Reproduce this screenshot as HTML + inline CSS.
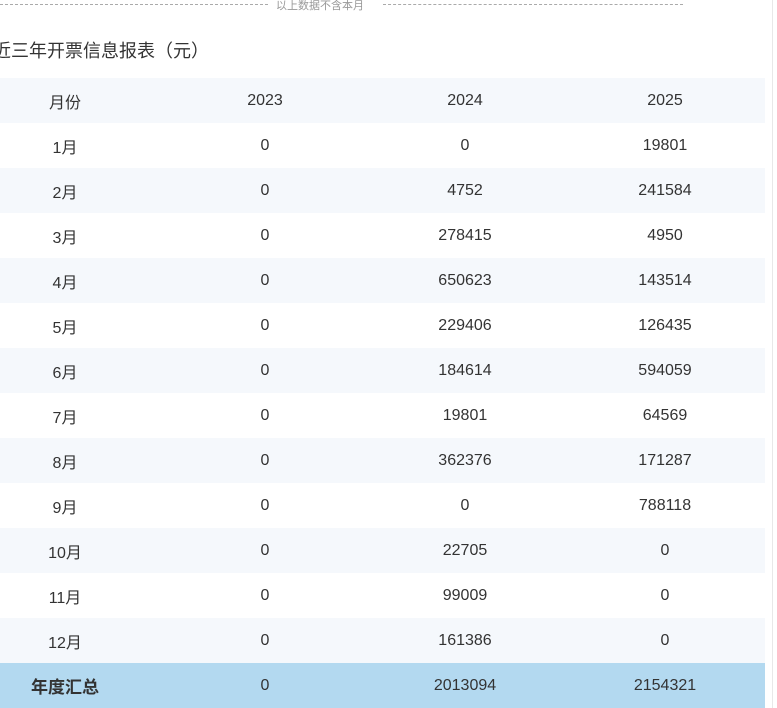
<!DOCTYPE html>
<html><head><meta charset="utf-8"><style>
body{margin:0;width:777px;height:708px;overflow:hidden;background:#fff;font-family:"Liberation Sans","Noto Sans CJK SC",sans-serif;color:#333;position:relative}
.dl{position:absolute;top:4px;border-top:1px dashed #aaa}
.nt{position:absolute;top:-3px;left:276px;font-size:11px;color:#999}
.tt{position:absolute;top:37px;left:-7px;font-size:18px;color:#333}
table{position:absolute;left:-35px;top:78px;border-collapse:collapse;width:800px}
td{height:45px;padding:0;width:200px;text-align:center;font-size:16px;color:#333}
tr:nth-child(odd) td{background:#f5f8fc}
tr.t td{background:#b3d9f0}
tr.t td:first-child{font-weight:bold;font-size:17px}
</style></head><body>
<div class="dl" style="left:0;width:268px"></div>
<div class="nt">以上数据不含本月</div>
<div class="dl" style="left:383px;width:300px"></div>
<div class="tt">近三年开票信息报表（元）</div>
<table>
<tr><td>月份</td><td>2023</td><td>2024</td><td>2025</td></tr>
<tr><td>1月</td><td>0</td><td>0</td><td>19801</td></tr>
<tr><td>2月</td><td>0</td><td>4752</td><td>241584</td></tr>
<tr><td>3月</td><td>0</td><td>278415</td><td>4950</td></tr>
<tr><td>4月</td><td>0</td><td>650623</td><td>143514</td></tr>
<tr><td>5月</td><td>0</td><td>229406</td><td>126435</td></tr>
<tr><td>6月</td><td>0</td><td>184614</td><td>594059</td></tr>
<tr><td>7月</td><td>0</td><td>19801</td><td>64569</td></tr>
<tr><td>8月</td><td>0</td><td>362376</td><td>171287</td></tr>
<tr><td>9月</td><td>0</td><td>0</td><td>788118</td></tr>
<tr><td>10月</td><td>0</td><td>22705</td><td>0</td></tr>
<tr><td>11月</td><td>0</td><td>99009</td><td>0</td></tr>
<tr><td>12月</td><td>0</td><td>161386</td><td>0</td></tr>
<tr class="t"><td>年度汇总</td><td>0</td><td>2013094</td><td>2154321</td></tr>
</table>
<div style="position:absolute;left:765px;top:0;width:12px;height:708px;background:#fff"></div>
<div style="position:absolute;left:772px;top:0;width:1px;height:708px;background:#e8e8e8"></div>
</body></html>
